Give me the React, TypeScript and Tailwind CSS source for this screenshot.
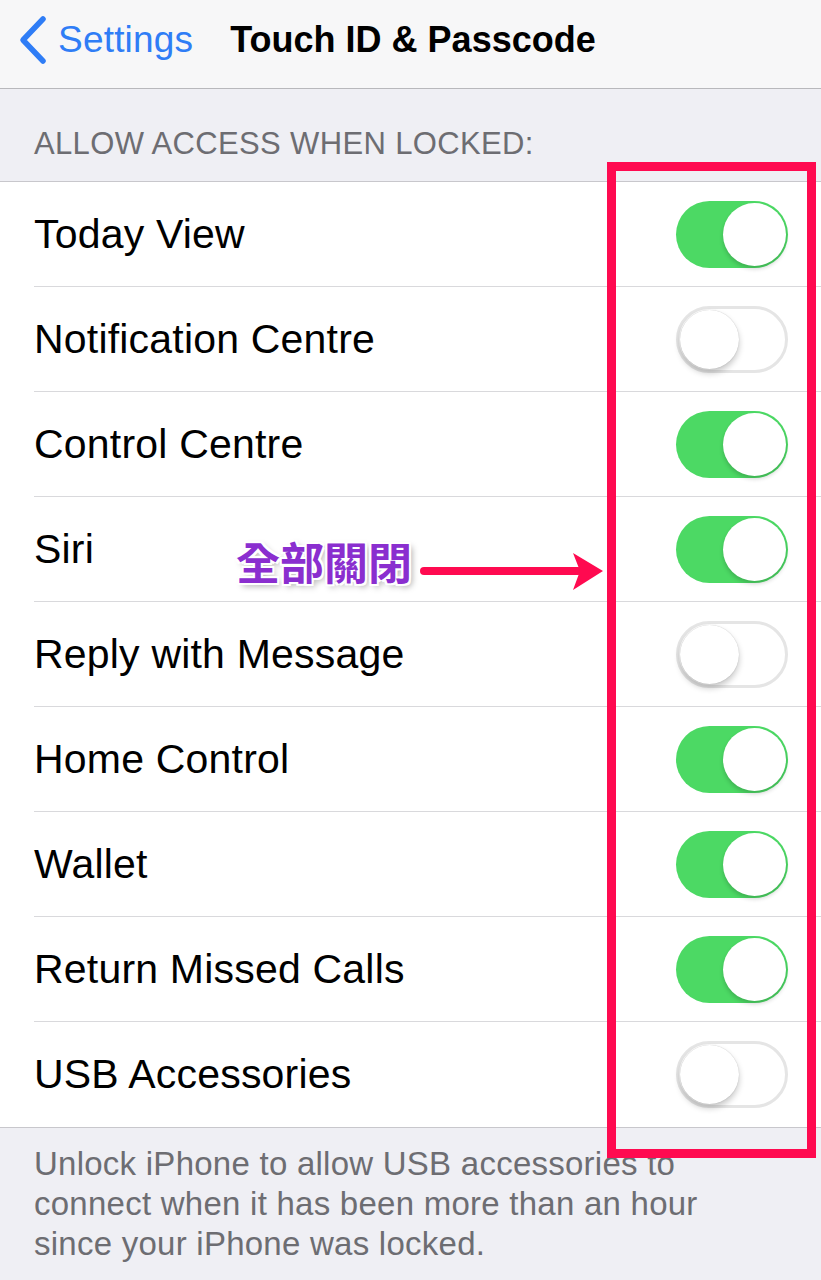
import React from "react";

const rows: [string, boolean][] = [
  ["Today View", true],
  ["Notification Centre", false],
  ["Control Centre", true],
  ["Siri", true],
  ["Reply with Message", false],
  ["Home Control", true],
  ["Wallet", true],
  ["Return Missed Calls", true],
  ["USB Accessories", false],
];

function Toggle({ on }: { on: boolean }) {
  if (on) {
    return (
      <div className="relative w-[112px] h-[67px] rounded-full bg-[#4cd964] shrink-0">
        <div className="absolute right-[2px] top-[2px] w-[63px] h-[63px] rounded-full bg-white shadow-[0_3px_4px_rgba(0,0,0,0.18)]" />
      </div>
    );
  }
  return (
    <div className="relative w-[112px] h-[67px] rounded-full bg-white border-[3px] border-[#e5e5e5] shrink-0">
      <div className="absolute left-[1px] top-[1px] w-[59px] h-[59px] rounded-full bg-white shadow-[0_4px_6px_rgba(0,0,0,0.22),0_0_1px_rgba(0,0,0,0.25)]" />
    </div>
  );
}

export default function App() {
  return (
    <div className="relative w-[821px] h-[1280px] overflow-hidden bg-[#efeff4] font-['Liberation_Sans',Arial,sans-serif]">
      {/* Nav bar */}
      <div className="h-[89px] bg-[#f7f7f8] border-b border-[#b8b8bc] flex items-center pb-[9px]">
        <svg width="30" height="50" viewBox="0 0 30 50" className="ml-[17px] shrink-0">
          <path d="M26 4 L6 25 L26 46" fill="none" stroke="#2f7df6" strokeWidth="5.5" strokeLinecap="round" strokeLinejoin="round" />
        </svg>
        <span className="ml-[11px] text-[37px] leading-none text-[#2f7df6] tracking-[0.2px]">Settings</span>
        <span className="ml-[37px] text-[36px] leading-none font-bold text-black">Touch ID &amp; Passcode</span>
      </div>

      {/* Section header */}
      <div className="pt-[37px] pb-[19px] pl-[34px] text-[31px] leading-[36px] text-[#6d6d72] tracking-[0.35px]">
        ALLOW ACCESS WHEN LOCKED:
      </div>

      {/* List */}
      <div className="bg-white border-t border-b border-[#c8c7cc]">
        {rows.map(([label, on], i) => (
          <div key={label} className="h-[105px] pl-[34px] flex">
            <div
              className={
                "flex-1 flex items-center justify-between pr-[33px] " +
                (i < rows.length - 1 ? "border-b border-[#d9d9dc]" : "")
              }
            >
              <span className="text-[41px] leading-none text-black tracking-[0.2px]">{label}</span>
              <Toggle on={on} />
            </div>
          </div>
        ))}
      </div>

      {/* Footer */}
      <div className="pt-[16px] pl-[34px] pr-[20px] text-[33px] leading-[40px] text-[#6d6d72] tracking-[0.25px] whitespace-nowrap">
        Unlock iPhone to allow USB accessories to
        <br />
        connect when it has been more than an hour
        <br />
        since your iPhone was locked.
      </div>

      {/* Red highlight rectangle */}
      <div className="absolute left-[607px] top-[162px] w-[209px] h-[996px] border-[9px] border-[#ff0a50] pointer-events-none" />

      {/* Annotation text */}
      <div className="absolute left-[236px] top-[535px] text-[44px] leading-[52px] font-bold text-[#8a2ecf] font-['Noto_Sans_CJK_TC','Noto_Sans_CJK_SC',sans-serif] [text-shadow:0_0_2px_#fff,0_0_3px_#fff,2px_2px_0_#fff,-2px_-2px_0_#fff,2px_-2px_0_#fff,-2px_2px_0_#fff,3px_3px_6px_rgba(0,0,0,0.35)]">
        全部關閉
      </div>

      {/* Arrow */}
      <svg className="absolute left-[418px] top-[548px]" width="190" height="46" viewBox="0 0 190 46">
        <line x1="6" y1="23" x2="160" y2="23" stroke="#ff0a50" strokeWidth="8" strokeLinecap="round" />
        <path d="M155 5 L185 23 L155 42 L162 23 Z" fill="#ff0a50" />
      </svg>
    </div>
  );
}
